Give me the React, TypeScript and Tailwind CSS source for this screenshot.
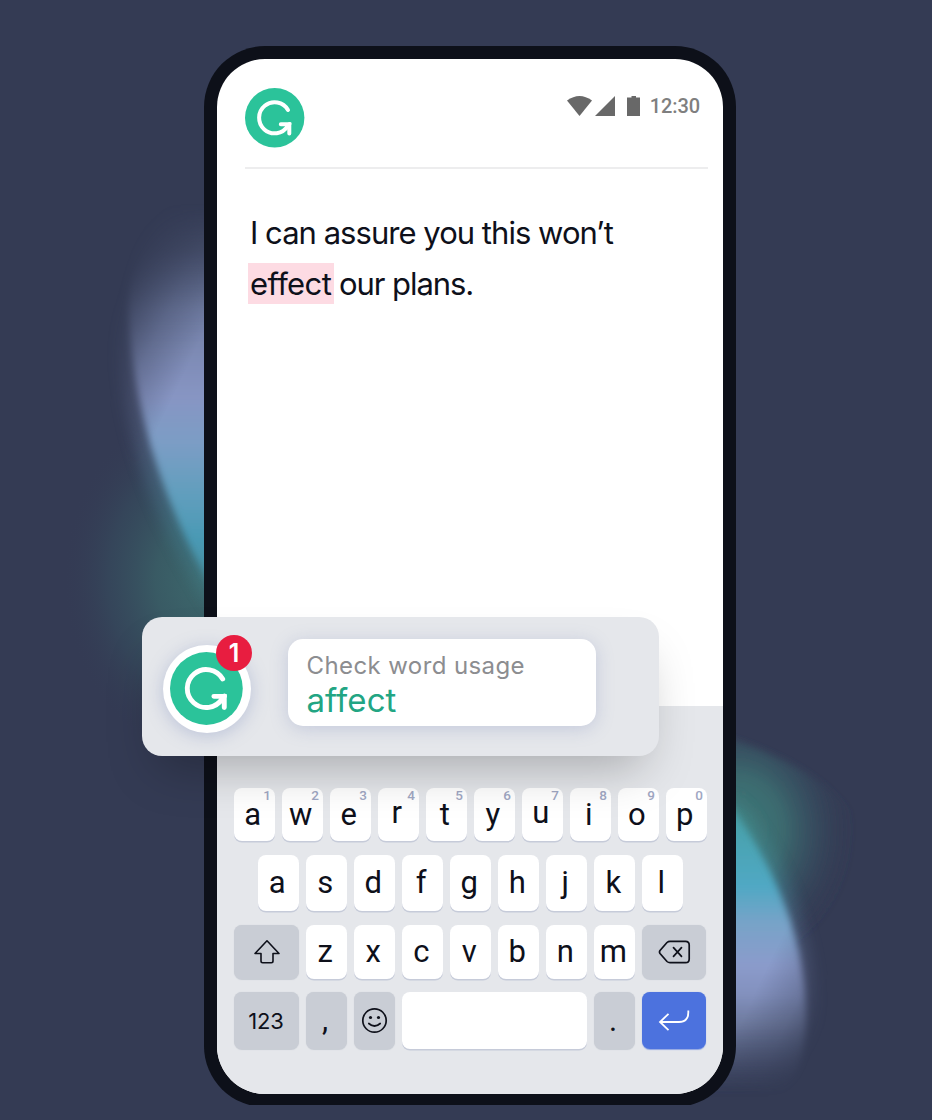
import type { ReactNode } from "react";

function GMark({ className }: { className: string }) {
  return (
    <svg viewBox="0 0 60 60" className={className} fill="none">
      <circle cx="29.700" cy="29.800" r="29.700" fill="#2bc39a" />
      <path
        d="M43 22A15.500 15.500 0 1 0 42.700 38.100L44.500 36"
        stroke="#fff"
        strokeWidth="4"
        strokeLinecap="round"
      />
      <path d="M35.800 36.200H44.300V45.400" stroke="#fff" strokeWidth="4" strokeLinecap="round" />
    </svg>
  );
}

function Glow() {
  return (
    <svg className="absolute inset-0" width="932" height="1105" viewBox="0 0 932 1105" fill="none">
      <defs>
        <linearGradient id="leftBeam" gradientUnits="userSpaceOnUse" x1="0" y1="205" x2="0" y2="590">
          <stop offset="0" stopColor="#6b789c" stopOpacity="0" />
          <stop offset="0.12" stopColor="#6b789c" stopOpacity="0.3" />
          <stop offset="0.27" stopColor="#7481a8" stopOpacity="0.9" />
          <stop offset="0.38" stopColor="#7d8ab4" />
          <stop offset="0.5" stopColor="#8795c3" />
          <stop offset="0.62" stopColor="#7b9dc5" />
          <stop offset="0.75" stopColor="#619ebd" />
          <stop offset="0.87" stopColor="#4999b4" />
          <stop offset="1" stopColor="#458c9b" />
        </linearGradient>
        <linearGradient id="rightBeam" gradientUnits="userSpaceOnUse" x1="0" y1="790" x2="0" y2="1092">
          <stop offset="0" stopColor="#459b9d" />
          <stop offset="0.18" stopColor="#4ba4b4" />
          <stop offset="0.32" stopColor="#50a8c4" />
          <stop offset="0.44" stopColor="#77a3c8" />
          <stop offset="0.58" stopColor="#8b9bcb" />
          <stop offset="0.68" stopColor="#8290bd" />
          <stop offset="0.77" stopColor="#7481a6" stopOpacity="0.9" />
          <stop offset="0.88" stopColor="#657195" stopOpacity="0.45" />
          <stop offset="1" stopColor="#4a5477" stopOpacity="0" />
        </linearGradient>
        <linearGradient id="leftFade" gradientUnits="userSpaceOnUse" x1="120" y1="292" x2="213" y2="337">
          <stop offset="0" stopColor="#fff" stopOpacity="0.05" />
          <stop offset="0.5" stopColor="#fff" stopOpacity="0.65" />
          <stop offset="0.9" stopColor="#fff" />
        </linearGradient>
        <linearGradient id="rightFade" gradientUnits="userSpaceOnUse" x1="822" y1="1068" x2="729" y2="1023">
          <stop offset="0" stopColor="#fff" stopOpacity="0.05" />
          <stop offset="0.5" stopColor="#fff" stopOpacity="0.7" />
          <stop offset="0.9" stopColor="#fff" />
        </linearGradient>
        <mask id="leftMask" maskUnits="userSpaceOnUse" x="50" y="150" width="220" height="500">
          <rect x="50" y="150" width="220" height="500" fill="url(#leftFade)" />
        </mask>
        <mask id="rightMask" maskUnits="userSpaceOnUse" x="660" y="700" width="230" height="405">
          <rect x="660" y="700" width="230" height="405" fill="url(#rightFade)" />
        </mask>
        <radialGradient id="leftGreen" gradientUnits="userSpaceOnUse" cx="0" cy="0" r="1" gradientTransform="translate(206 580) scale(144 180)">
          <stop offset="0" stopColor="#3d696d" />
          <stop offset="0.35" stopColor="#3a6067" stopOpacity="0.85" />
          <stop offset="0.68" stopColor="#365060" stopOpacity="0.5" />
          <stop offset="1" stopColor="#343b54" stopOpacity="0" />
        </radialGradient>
        <radialGradient id="rightGreen" gradientUnits="userSpaceOnUse" cx="0" cy="0" r="1" gradientTransform="translate(736 830) scale(118 135)">
          <stop offset="0" stopColor="#3f7c7b" />
          <stop offset="0.4" stopColor="#3c6c70" stopOpacity="0.95" />
          <stop offset="0.65" stopColor="#385665" stopOpacity="0.65" />
          <stop offset="1" stopColor="#343b54" stopOpacity="0" />
        </radialGradient>
        <filter id="edgeBlur" x="-30%" y="-30%" width="160%" height="160%">
          <feGaussianBlur stdDeviation="3.5" />
        </filter>
        <filter id="haloBlur" x="-30%" y="-30%" width="160%" height="160%">
          <feGaussianBlur stdDeviation="8" />
        </filter>
      </defs>
      <rect x="50" y="390" width="200" height="380" fill="url(#leftGreen)" />
      <g mask="url(#leftMask)">
        <path d="M250 200C150 205 118 265 120 350C124 440 158 525 212 608H250Z" fill="url(#leftBeam)" opacity="0.28" filter="url(#haloBlur)" />
        <path d="M260 170C150 180 122 250 129 325C134 400 156 490 214 592H260Z" fill="url(#leftBeam)" filter="url(#edgeBlur)" />
      </g>
      <path d="M700 730L738 741C790 760 850 790 875 850C875 900 840 960 790 980H700Z" fill="url(#rightGreen)" filter="url(#edgeBlur)" />
      <g mask="url(#rightMask)">
        <path d="M690 800H736C780 850 812 930 814 1000C814 1050 780 1105 690 1105Z" fill="url(#rightBeam)" opacity="0.28" filter="url(#haloBlur)" />
        <path d="M690 754C740 811 783 880 799 952C810 1010 808 1045 796 1074C772 1110 720 1120 690 1120Z" fill="url(#rightBeam)" filter="url(#edgeBlur)" />
      </g>
    </svg>
  );
}

function Key({
  children,
  hint,
  tone = "light",
  className = "w-[41px]",
}: {
  children?: ReactNode;
  hint?: string;
  tone?: "light" | "dark" | "blue";
  className?: string;
}) {
  const tones = {
    light: "bg-white shadow-[0_1.5px_0.5px_#c6cbd9]",
    dark: "bg-[#c9cdd5] shadow-[0_0.5px_1px_#c6cbd3]",
    blue: "bg-[#4c72de] shadow-[0_0.5px_1px_#8fa5e4]",
  };
  return (
    <div
      className={`relative flex h-full shrink-0 items-center justify-center rounded-[8px] text-[31px] leading-none text-[#0e101a] ${tones[tone]} ${className}`}
    >
      {hint && (
        <span className="absolute right-[3.5px] top-0 text-[13.500px] leading-[15px] font-medium text-[#a0a7c3]">
          {hint}
        </span>
      )}
      {children}
    </div>
  );
}

const topRow = [
  ["a", "1"],
  ["w", "2"],
  ["e", "3"],
  ["r", "4"],
  ["t", "5"],
  ["y", "6"],
  ["u", "7"],
  ["i", "8"],
  ["o", "9"],
  ["p", "0"],
];

function Keyboard() {
  return (
    <div className="flex h-[388px] flex-col bg-[#e5e7eb] pl-[16.500px] pt-[82px] font-['Roboto',sans-serif]">
      <div className="flex h-[53px] gap-[7px]">
        {topRow.map(([letter, hint]) => (
          <Key key={letter} hint={hint}>
            <span className={letter === "r" || letter === "u" ? "pr-[2.500px] pb-[4px]" : "pr-[2.500px] pb-px"}>
              {letter}
            </span>
          </Key>
        ))}
      </div>
      <div className="mt-[14px] flex h-[56px] gap-[7px] pl-6">
        {"asdfghjkl".split("").map((letter) => (
          <Key key={letter}>
            <span className="pr-[1.500px] pb-[2px]">{letter}</span>
          </Key>
        ))}
      </div>
      <div className="mt-[14px] flex h-[54px] gap-[7px]">
        <Key tone="dark" className="w-[65px]">
          <svg width="28" height="26" viewBox="0 0 28 26" fill="none" stroke="#0e101a" strokeWidth="1.6" strokeLinejoin="round" className="ml-[2px]">
            <path d="M14 1.800L26 14.500H20V22Q20 23.700 18.300 23.700H9.700Q8 23.700 8 22V14.500H2Z" />
          </svg>
        </Key>
        {"zxcvbnm".split("").map((letter) => (
          <Key key={letter}>
            <span className="pr-[1.500px] pb-[2px]">{letter}</span>
          </Key>
        ))}
        <Key tone="dark" className="w-[64.500px]">
          <svg width="33" height="24" viewBox="0 0 33 24" fill="none" stroke="#0e101a" strokeWidth="1.7" strokeLinecap="round" strokeLinejoin="round" className="ml-px">
            <path d="M12 1.300H27.500Q31.200 1.300 31.200 5V19Q31.200 22.700 27.500 22.700H12Q10.300 22.700 9 21.500L2 13.500Q1 12 2 10.500L9 2.500Q10.300 1.300 12 1.300Z" />
            <path d="M15.500 7.700L23.500 16.300M23.500 7.700L15.500 16.300" />
          </svg>
        </Key>
      </div>
      <div className="mt-[13px] flex h-[57px] gap-[7px]">
        <Key tone="dark" className="w-[65px] font-['Inter',sans-serif]">
          <span className="text-[22px] tracking-[-0.2px]">123</span>
        </Key>
        <Key tone="dark">
          <span className="pr-[2px] pb-[3px]">,</span>
        </Key>
        <Key tone="dark">
          <svg width="27" height="27" viewBox="0 0 27 27" fill="none" stroke="#0e101a" strokeWidth="1.7" strokeLinecap="round">
            <circle cx="13.500" cy="13.500" r="11.700" />
            <path d="M7.800 16.500Q13.500 21.500 19.200 16.500" />
            <circle cx="9.500" cy="10.500" r="1.600" fill="#0e101a" stroke="none" />
            <circle cx="17.500" cy="10.500" r="1.600" fill="#0e101a" stroke="none" />
          </svg>
        </Key>
        <Key className="w-[185px]" />
        <Key tone="dark">
          <span className="pr-[2px]">.</span>
        </Key>
        <Key tone="blue" className="w-[64.500px]">
          <svg width="34" height="24" viewBox="0 0 34 24" fill="none" stroke="#fff" strokeWidth="1.800" className="ml-px">
            <path d="M31.300 1.500V3.500Q31.300 13 22 13H3M11.500 4.800L3 13L11.500 21.200" />
          </svg>
        </Key>
      </div>
    </div>
  );
}

function StatusBar() {
  return (
    <div className="flex h-5 items-center text-[#686868]">
      <svg width="73" height="20" viewBox="0 0 73 20" fill="currentColor">
        <path d="M0 4.500Q12.500 -4.500 25 4.500L12.500 20Z" />
        <path d="M48 0V20H28Z" />
        <path d="M64.500 0H69V1.500H73V20H60V1.500H64.500Z" />
      </svg>
      <span className="ml-[10px] font-['Roboto',sans-serif] text-[20px] leading-5 font-medium tracking-[-0.1px] text-[#7f7f7f]">
        12:30
      </span>
    </div>
  );
}

function Suggestion() {
  return (
    <div className="absolute left-[142px] top-[617px] flex h-[138.500px] w-[517px] rounded-[20px] bg-[#e5e7eb] font-['Inter',sans-serif] shadow-[0_26px_50px_-16px_rgba(0,0,0,0.28)]">
      <div className="relative ml-[21px] mt-[28px] flex h-[88px] w-[88px] items-center justify-center rounded-full bg-white shadow-[0_3px_18px_rgba(110,125,180,0.35)]">
        <GMark className="h-[73.500px] w-[73.500px]" />
        <span className="absolute -top-[10px] left-[53px] flex h-[36px] w-[36px] items-center justify-center rounded-full bg-[#e81d40] pt-px text-[25px] leading-none font-semibold text-white">
          1
        </span>
      </div>
      <div className="ml-[37px] mt-[22px] h-[87px] w-[308px] rounded-[15px] bg-white pl-[18.500px] pt-[11px] shadow-[0_3px_18px_rgba(110,125,180,0.28)]">
        <p className="text-[24px] leading-[32px] tracking-[0.4px] text-[#8c8d90]">Check word usage</p>
        <p className="text-[33px] leading-[36px] tracking-[0.050px] text-[#22a583]">affect</p>
      </div>
    </div>
  );
}

export default function App() {
  return (
    <main className="h-[1120px] w-[932px] overflow-hidden bg-[#343b54]">
      <div className="relative h-[1105px] overflow-hidden">
        <Glow />
        <div className="relative ml-[204px] mt-[46px] h-[1061px] w-[532px] rounded-[61px] bg-[#0d1019] p-[13px]">
          <div className="flex h-[1035px] flex-col overflow-hidden rounded-[48px] bg-white">
            <header className="ml-7 mr-[15px] flex h-[110px] items-start justify-between border-b-2 border-[#ededee] pr-2 pt-[29px]">
              <GMark className="h-[60px] w-[60px]" />
              <div className="pt-2">
                <StatusBar />
              </div>
            </header>
            <p className="grow pl-[33px] pt-[38px] font-['Inter',sans-serif] text-[31px] leading-[51px] font-[370] tracking-[-0.970px] text-[#0e101a]">
              I can assure you this won’t
              <br />
              <span className="-ml-[2px] bg-[#fddbe3] py-[2px] pl-[2px] pr-[3px] tracking-[-0.600px]">effect</span>
              <span className="-ml-[3px] tracking-[-1.050px]"> our plans.</span>
            </p>
            <Keyboard />
          </div>
        </div>
        <Suggestion />
      </div>
    </main>
  );
}
